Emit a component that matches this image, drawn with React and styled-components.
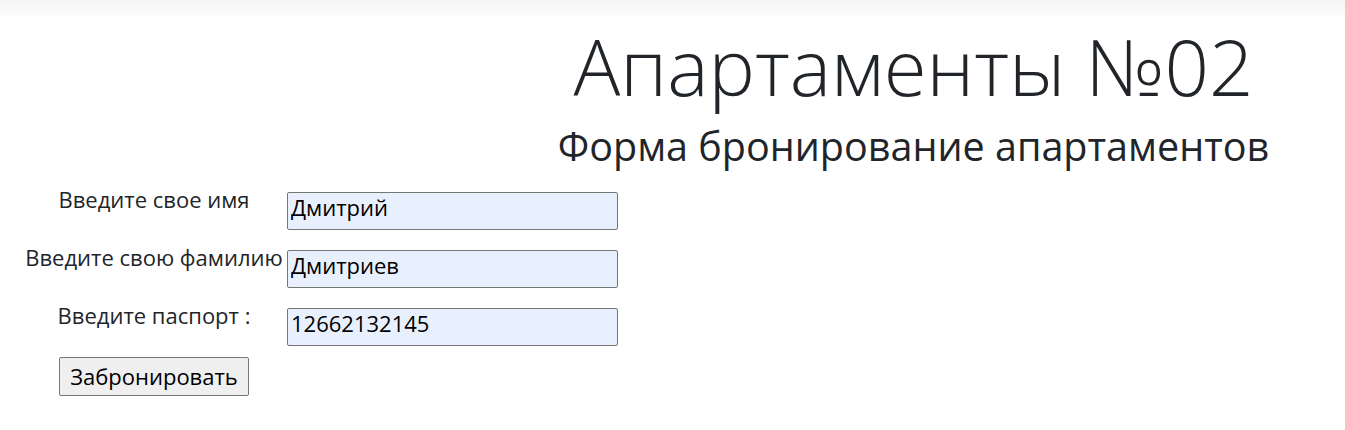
import React from 'react'
import styled, { createGlobalStyle } from 'styled-components'

const GlobalStyle = createGlobalStyle`
    html, body {
        margin: 0;
        padding: 0;
        background: #fff;
    }
    body {
        font-family: "Open Sans", "Liberation Sans", sans-serif;
        color: #212529;
    }
`

const fields = [
    { label: 'Введите свое имя', value: 'Дмитрий' },
    { label: 'Введите свою фамилию', value: 'Дмитриев' },
    { label: 'Введите паспорт :', value: '12662132145' },
]

const App = () => (
    <Page>
        <GlobalStyle />
        <TopShade />
        <Hero>
            <Title>Апартаменты №02</Title>
            <Subtitle>Форма бронирование апартаментов</Subtitle>
        </Hero>
        <Form onSubmit={e => e.preventDefault()}>
            {fields.map(f => (
                <Row key={f.label}>
                    <Label>{f.label}</Label>
                    <Input defaultValue={f.value} />
                </Row>
            ))}
            <Submit type="submit">Забронировать</Submit>
        </Form>
    </Page>
)

export default App

const Page = styled.div`
    width: 1345px;
    min-height: 430px;
`

const TopShade = styled.div`
    height: 20px;
    background: linear-gradient(#f4f4f4, #fff);
`

const Hero = styled.header`
    padding-left: 482px;
    text-align: center;
`

const Title = styled.h1`
    font-size: 78px;
    font-weight: 300;
    line-height: 1.2;
    margin: 0;
`

const Subtitle = styled.h2`
    font-size: 39.5px;
    font-weight: 400;
    line-height: 1.2;
    margin: 9px 0 0;
`

const Form = styled.form`
    display: flex;
    flex-direction: column;
    align-items: flex-start;
    padding-top: 22px;
    padding-left: 21px;
`

const Row = styled.div`
    display: flex;
    align-items: flex-start;
    margin-bottom: 20px;
`

const Label = styled.label`
    width: 266px;
    margin-top: -1px;
    text-align: center;
    font-size: 22px;
    line-height: 16px;
    white-space: nowrap;
`

const Input = styled.input`
    box-sizing: border-box;
    width: 331px;
    height: 38px;
    padding: 0 3px 8px;
    border: 1px solid #767676;
    border-radius: 2px;
    background: #e8f0fe;
    font-family: "Open Sans", "Liberation Sans", sans-serif;
    font-size: 22px;
    color: #000;
`

const Submit = styled.button`
    box-sizing: border-box;
    width: 190px;
    height: 39px;
    margin-left: 38px;
    margin-top: -9px;
    padding: 0;
    border: 1px solid #767676;
    border-radius: 2px;
    background: #efefef;
    font-family: "Open Sans", "Liberation Sans", sans-serif;
    font-size: 22px;
    color: #000;
`
